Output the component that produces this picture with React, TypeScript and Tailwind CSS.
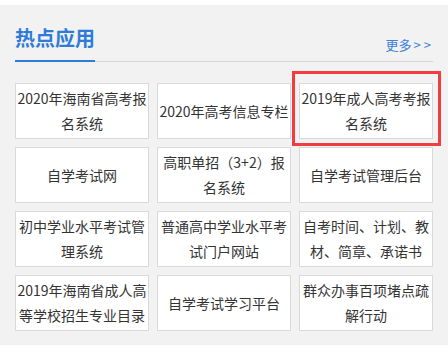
import React from 'react';

const apps = [
  '2020年海南省高考报名系统',
  '2020年高考信息专栏',
  '2019年成人高考考报名系统',
  '自学考试网',
  '高职单招（3+2）报名系统',
  '自学考试管理后台',
  '初中学业水平考试管理系统',
  '普通高中学业水平考试门户网站',
  '自考时间、计划、教材、简章、承诺书',
  '2019年海南省成人高等学校招生专业目录',
  '自学考试学习平台',
  '群众办事百项堵点疏解行动',
];

export default function App() {
  return (
    <div className="w-[448px] h-[363px] bg-white pt-[5px] font-['Noto_Sans_CJK_SC','Microsoft_YaHei',sans-serif]">
      <div className="bg-[#f2f2f2] px-[15px] pt-[20px] pb-[14px]">
        {/* Header */}
        <div className="flex items-end justify-between border-b border-[#d6d6d6]">
          <h2 className="text-[20px] leading-[26px] font-bold text-[#2f7bd8] pb-[9px] border-b-2 border-[#2f7bd8] -mb-px">
            热点应用
          </h2>
          <a className="text-[13px] leading-[18px] text-[#3b7fd9] mb-[7px] mr-[-1px] cursor-pointer">
            更多<span className="ml-[2px] tracking-[3px]">&gt;&gt;</span>
          </a>
        </div>

        {/* Grid */}
        <div className="grid grid-cols-3 gap-x-[8px] gap-y-[8px] mt-[21px]">
          {apps.map((name, i) => (
            <div key={i} className="relative">
              <div className="h-[56px] bg-white border border-[#d9d9d9] flex items-center justify-center text-center text-[14px] leading-[25px] text-[#333] px-px">
                {name}
              </div>
              {i === 2 && (
                <div className="absolute -left-[7px] -top-[12px] w-[149px] h-[75px] border-[3px] border-[#f23c3f] pointer-events-none" />
              )}
            </div>
          ))}
        </div>
      </div>
    </div>
  );
}
